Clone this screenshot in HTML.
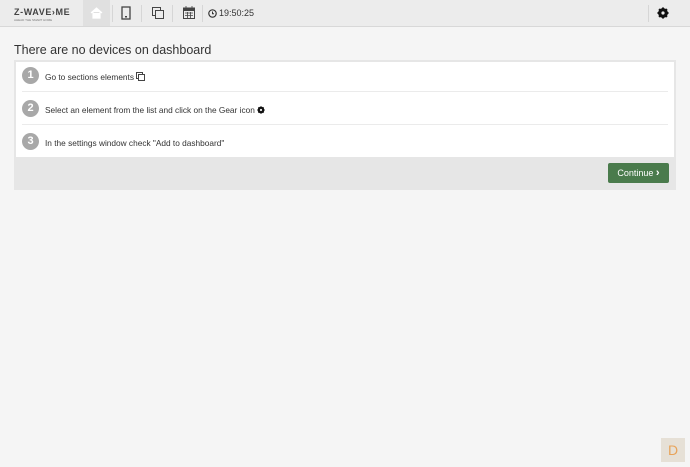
<!DOCTYPE html>
<html><head><style>
body{margin:0;width:690px;height:467px;background:#f5f5f5;font-family:"Liberation Sans",sans-serif;position:relative;overflow:hidden}
.hdr{position:absolute;left:0;top:0;width:690px;height:26px;background:#ececec;border-bottom:1px solid #d8d8d8}
.logo{position:absolute;left:14px;top:7px;font-weight:bold;font-size:9px;letter-spacing:0.6px;color:#444}
.logo small{position:absolute;left:0;top:11px;font-size:3px;font-weight:normal;letter-spacing:0;white-space:nowrap;color:#777}
.home{position:absolute;left:83px;top:0;width:27px;height:26px;background:#e0e0e0}
.sep{position:absolute;top:5px;width:1px;height:17px;background:#d6d6d6}
.time{position:absolute;left:208px;top:8px;font-size:9px;color:#333}
h1{position:absolute;left:14px;top:43px;margin:0;font-weight:normal;font-size:12.5px;color:#333}
.panel{position:absolute;left:14px;top:60px;width:662px;height:130px;background:#e6e6e6}
.inner{position:absolute;left:2px;top:2px;width:658px;height:95px;background:#fff}
.row{position:absolute;left:0;width:658px;height:33px}
.row .n{position:absolute;left:6px;top:5px;width:17px;height:17px;border-radius:50%;background:#a8a8a8;color:#fff;font-size:11px;font-weight:bold;text-align:center;line-height:17px}
.row .t{position:absolute;left:29px;top:10px;font-size:8.3px;color:#333;white-space:nowrap}
.line{position:absolute;left:6px;width:646px;height:1px;background:#ebebeb}
.btn{position:absolute;left:594px;top:103px;width:61px;height:20px;background:#4a7b4c;border-radius:2px;color:#fff;font-size:9px;line-height:20px;text-align:center}
.d{position:absolute;left:661px;top:438px;width:24px;height:24px;background:#e6e0d6;color:#e8a35a;font-size:14px;text-align:center;line-height:24px}
</style></head><body>
<div class="hdr">
<div class="logo">Z-WAVE&#x203A;ME<small>AHEAD THE SMART HOME</small></div>
<div class="home"><svg width="27" height="26"><path d="M8 13 L13.5 8 L19 13 M10 12 V18 H17 V12" fill="#fff" stroke="#fff" stroke-width="1.2"/></svg></div>
<div class="sep" style="left:112px"></div>
<svg style="position:absolute;left:121px;top:6px" width="10" height="14"><rect x="1" y="1" width="8" height="12" fill="none" stroke="#444" stroke-width="1.3"/><rect x="4" y="10" width="2" height="1.5" fill="#444"/></svg>
<div class="sep" style="left:141px"></div>
<svg style="position:absolute;left:152px;top:7px" width="12" height="12"><rect x="0.5" y="0.5" width="8" height="8" fill="none" stroke="#444"/><rect x="3.5" y="3.5" width="8" height="8" fill="#ececec" stroke="#444"/></svg>
<div class="sep" style="left:172px"></div>
<svg style="position:absolute;left:183px;top:6px" width="12" height="13"><rect x="0.5" y="2" width="11" height="10.5" fill="none" stroke="#444"/><rect x="0.5" y="2" width="11" height="3" fill="#444"/><path d="M3 0V3M9 0V3M2 7H10M2 9.5H10M4.5 6V12M7.5 6V12" stroke="#444" stroke-width="0.8"/></svg>
<div class="sep" style="left:202px"></div>
<svg style="position:absolute;left:208px;top:9px" width="9" height="9"><circle cx="4.5" cy="4.5" r="3.7" fill="none" stroke="#333" stroke-width="1.2"/><path d="M4.5 2.5V4.8H6" stroke="#333" fill="none"/></svg>
<div class="time" style="left:219px">19:50:25</div>
<div class="sep" style="left:648px"></div>
<svg style="position:absolute;left:657px;top:7px" width="12" height="12" viewBox="0 0 12 12"><circle cx="6" cy="6" r="3.8" fill="none" stroke="#111" stroke-width="2.2"/><g stroke="#111" stroke-width="2"><path d="M6 0.5V11.5M0.5 6H11.5M2.1 2.1L9.9 9.9M9.9 2.1L2.1 9.9"/></g><circle cx="6" cy="6" r="1.6" fill="#ececec"/></svg>
</div>
<h1>There are no devices on dashboard</h1>
<div class="panel">
<div class="inner">
<div class="row" style="top:0"><div class="n">1</div><div class="t">Go to sections elements <svg width="9" height="9" style="vertical-align:-1px"><rect x="0.5" y="0.5" width="6" height="6" fill="none" stroke="#444"/><rect x="2.5" y="2.5" width="6" height="6" fill="#fff" stroke="#444"/></svg></div></div>
<div class="line" style="top:29px"></div>
<div class="row" style="top:33px"><div class="n">2</div><div class="t">Select an element from the list and click on the Gear icon <svg width="8" height="8" viewBox="0 0 12 12" style="vertical-align:-1px"><circle cx="6" cy="6" r="3.8" fill="none" stroke="#111" stroke-width="2.4"/><path d="M6 0.5V11.5M0.5 6H11.5M2.1 2.1L9.9 9.9M9.9 2.1L2.1 9.9" stroke="#111" stroke-width="2"/><circle cx="6" cy="6" r="1.6" fill="#fff"/></svg></div></div>
<div class="line" style="top:62px"></div>
<div class="row" style="top:66px"><div class="n">3</div><div class="t">In the settings window check "Add to dashboard"</div></div>
</div>
<div class="btn">Continue <b style="font-size:11px">&#x203A;</b></div>
</div>
<div class="d">D</div>
</body></html>
